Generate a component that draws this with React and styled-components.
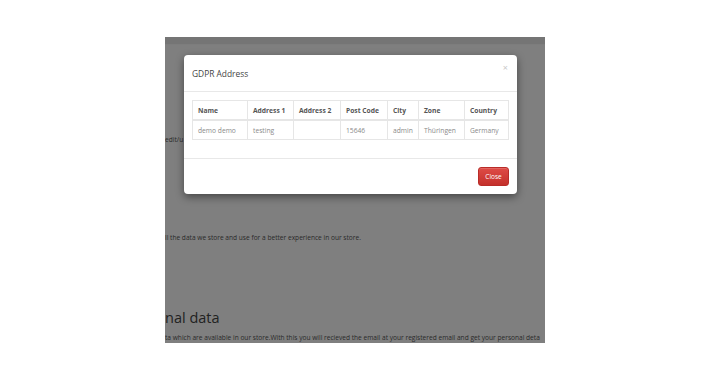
import React from 'react'
import styled, { createGlobalStyle } from 'styled-components'

const GlobalStyle = createGlobalStyle`
  html, body {
    margin: 0;
    padding: 0;
    background: #fff;
  }
  body {
    font-family: 'Open Sans', 'Liberation Sans', sans-serif;
  }
`

const Screen = styled.div`
  width: 710px;
  height: 380px;
  overflow: hidden;
  background: #fff;
`

const Frame = styled.div`
  position: relative;
  margin: 37px 0 0 165px;
  width: 380px;
  height: 306px;
  overflow: hidden;
  background: #fff;
`

const PageContent = styled.div`
  display: flex;
  flex-direction: column;
  color: #555;
  white-space: nowrap;
`

const TopBand = styled.div`
  height: 7px;
  background: #ebebeb;
  border-bottom: 1px solid #fafafa;
`

const PageLine = styled.p`
  margin: ${p => p.$top}px 0 0;
  font-size: 6.6px;
  line-height: 10px;
`

const PageHeading = styled.h2`
  margin: 65px 0 0;
  font-size: 14.5px;
  font-weight: 400;
  line-height: 20px;
  color: #444;
`

const Overlay = styled.div`
  position: absolute;
  inset: 0;
  background: rgba(0, 0, 0, 0.5);
`

const Modal = styled.div`
  position: absolute;
  left: 19px;
  top: 18px;
  width: 333px;
  background: #fff;
  border-radius: 4px;
  box-shadow: 0 3px 9px rgba(0, 0, 0, 0.45);
  display: flex;
  flex-direction: column;
`

const ModalHeader = styled.div`
  position: relative;
  height: 36px;
  padding: 0 8px;
  display: flex;
  align-items: center;
  border-bottom: 1px solid #e8e8e8;
`

const ModalTitle = styled.h4`
  margin: 0;
  font-size: 8.4px;
  font-weight: 400;
  color: #444;
`

const CloseX = styled.span`
  position: absolute;
  right: 9px;
  top: 8px;
  font-size: 9px;
  line-height: 9px;
  color: #c8c8c8;
`

const ModalBody = styled.div`
  padding: 8px 8px 0;
  height: 58px;
  border-bottom: 1px solid #e8e8e8;
`

const Table = styled.table`
  width: 316px;
  table-layout: fixed;
  border-collapse: collapse;
  font-size: 6.7px;
`

const HeadCell = styled.th`
  height: 18px;
  padding: 0 5px;
  text-align: left;
  font-weight: 700;
  color: #555;
  border: 1px solid #e6e6e6;
  border-bottom-width: 2px;
  white-space: nowrap;
`

const Cell = styled.td`
  height: 18px;
  padding: 0 5px;
  color: #8a8a8a;
  border: 1px solid #e6e6e6;
  white-space: nowrap;
`

const ModalFooter = styled.div`
  height: 35px;
  padding: 0 8px;
  display: flex;
  align-items: center;
  justify-content: flex-end;
`

const DangerButton = styled.button`
  width: 31px;
  height: 19px;
  padding: 0;
  border: 1px solid #b92c28;
  border-radius: 3px;
  background: linear-gradient(#de4b46, #c4302b);
  color: #fff;
  font-family: inherit;
  font-size: 6.5px;
  box-shadow: inset 0 1px 0 rgba(255, 255, 255, 0.15);
`

const widths = [55, 46, 47, 47, 31, 46, 44]
const columns = ['Name', 'Address 1', 'Address 2', 'Post Code', 'City', 'Zone', 'Country']
const row = ['demo demo', 'testing', '', '15646', 'admin', 'Thüringen', 'Germany']

export default function App() {
  return (
    <Screen>
      <GlobalStyle />
      <Frame>
        <PageContent>
          <TopBand />
          <PageLine $top={90}>edit/u</PageLine>
          <PageLine $top={88}>ll the data we store and use for a better experience in our store.</PageLine>
          <PageHeading>nal data</PageHeading>
          <PageLine $top={5}>
            ta which are available in our store.With this you will recieved the email at your registered email and get your personal deta
          </PageLine>
        </PageContent>
        <Overlay />
        <Modal>
          <ModalHeader>
            <ModalTitle>GDPR Address</ModalTitle>
            <CloseX>×</CloseX>
          </ModalHeader>
          <ModalBody>
            <Table>
              <colgroup>
                {widths.map((w, i) => <col key={i} style={{ width: w }} />)}
              </colgroup>
              <thead>
                <tr>
                  {columns.map(c => <HeadCell key={c}>{c}</HeadCell>)}
                </tr>
              </thead>
              <tbody>
                <tr>
                  {row.map((v, i) => <Cell key={i}>{v}</Cell>)}
                </tr>
              </tbody>
            </Table>
          </ModalBody>
          <ModalFooter>
            <DangerButton>Close</DangerButton>
          </ModalFooter>
        </Modal>
      </Frame>
    </Screen>
  )
}
